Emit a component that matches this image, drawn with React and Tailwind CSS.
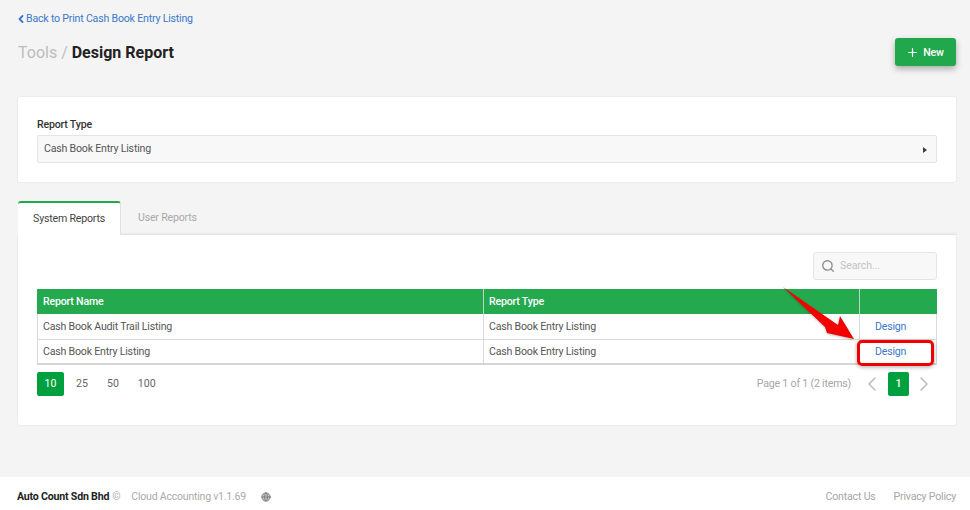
import React from "react";
import { ChevronLeft, ChevronRight, Plus, Search, Globe } from "lucide-react";

const font = { fontFamily: "Roboto, 'Liberation Sans', sans-serif" };

function Row({ name, last, designOffset }) {
  return (
    <div className={"flex h-[25.5px] items-center text-[10.6px] tracking-[-0.2px] text-[#555] bg-white " + (last ? "border-b-2 border-[#d4d4d4]" : "border-b border-[#d9d9d9]")}>
      <div className="w-[446px] h-full flex items-center pl-[5px] pt-[1px] border-r border-[#d9d9d9]">{name}</div>
      <div className="w-[376px] h-full flex items-center pl-[5px] pt-[1px] border-r border-[#d9d9d9]">Cash Book Entry Listing</div>
      <div className={"flex-1 h-full flex items-center pl-[15px] text-[#3a78c9] " + (designOffset ? "pt-[2px]" : "pt-[1px]")}>Design</div>
    </div>
  );
}

export default function App() {
  return (
    <div className="relative w-[970px] h-[510px] overflow-hidden bg-[#f4f4f4] flex flex-col" style={font}>
      <div className="flex-1 pl-[18px] pr-[14px]">
        <a className="flex items-center h-[14px] mt-[12px] text-[10.6px] tracking-[-0.2px] leading-[14px] text-[#3a78c9]">
          <ChevronLeft size={12} strokeWidth={3.6} className="shrink-0 -ml-[3px] -mr-[1px]" />
          <span>Back to Print Cash Book Entry Listing</span>
        </a>
        <div className="flex items-start justify-between mt-[12px]">
          <h1 className="text-[16px] leading-[28px] h-[27px] mt-[1px] font-normal text-[#bdbdbd]">
            Tools / <span className="font-bold text-[#222]">Design Report</span>
          </h1>
          <button className="w-[61px] h-[28px] rounded-[3px] bg-[#22a84c] text-white text-[10.6px] tracking-[-0.2px] font-medium flex items-center justify-center gap-[4px] pt-[1px] pr-[1px] shadow-[0_3px_6px_rgba(0,0,0,0.3)]">
            <Plus size={13} strokeWidth={2.2} />
            New
          </button>
        </div>

        <section className="mt-[31px] h-[85px] bg-white rounded-[2px] shadow-[0_0_2px_rgba(0,0,0,0.12)] px-[19px] pt-[21px]">
          <div className="text-[10.6px] tracking-[-0.2px] leading-[14px] font-medium text-[#333]">Report Type</div>
          <div className="mt-[3px] h-[28px] rounded-[2px] bg-[#f8f8f8] border border-[#e4e4e4] flex items-center justify-between pl-[6px] pr-[11px] pb-[1px] text-[10.6px] tracking-[-0.2px] text-[#555]">
            <span>Cash Book Entry Listing</span>
            <svg width="4" height="6" viewBox="0 0 4 6" className="mt-[2px] -mr-[2px]"><path d="M0 0 L4 3 L0 6 Z" fill="#3c3c3c" /></svg>
          </div>
        </section>

        <div className="mt-[19px] flex h-[33px] items-end relative z-10">
          <div className="w-[103px] h-[34px] mb-[-1px] bg-white border-t-2 border-[#22a84c] border-r border-r-[#e2e2e2] rounded-t-[3px] flex items-center justify-center text-[10.6px] tracking-[-0.2px] text-[#444]">
            System Reports
          </div>
          <div className="ml-[17px] h-[32px] flex items-center text-[10.6px] tracking-[-0.2px] text-[#a9a9a9] pb-[1px]">User Reports</div>
        </div>

        <section className="h-[191px] bg-white border-t border-[#e2e2e2] rounded-b-[2px] shadow-[0_0_2px_rgba(0,0,0,0.12)] px-[19px]">
          <div className="flex justify-end pt-[17px]">
            <div className="w-[124px] h-[28px] rounded-[3px] bg-[#f8f8f8] border border-[#e4e4e4] flex items-center pl-[7px] gap-[5px] text-[10.6px] tracking-[-0.1px] text-[#c4c4c4]">
              <Search size={14} strokeWidth={2.4} className="text-[#8f8f8f]" />
              <span>Search...</span>
            </div>
          </div>
          <div className="mt-[9px] w-[900px]">
            <div className="flex h-[25px] bg-[#24a94e] text-white text-[10.6px] tracking-[-0.2px] font-medium items-center">
              <div className="w-[447px] h-full flex items-center pl-[6px] border-r border-[#b9d9c2]">Report Name</div>
              <div className="w-[376px] h-full flex items-center pl-[5px] border-r border-[#b9d9c2]">Report Type</div>
              <div className="flex-1" />
            </div>
            <div className="border-x border-[#d9d9d9]">
              <Row name="Cash Book Audit Trail Listing" />
              <Row name="Cash Book Entry Listing" last designOffset />
            </div>
          </div>
          <div className="mt-[6px] flex items-center justify-between h-[25px] text-[10.6px] text-[#666]">
            <div className="flex items-center">
              <div className="w-[27px] h-[24px] rounded-[2px] bg-[#00a03e] text-white flex items-center justify-center">10</div>
              <span className="ml-[12px]">25</span>
              <span className="ml-[19px]">50</span>
              <span className="ml-[19px]">100</span>
            </div>
            <div className="flex items-center">
              <span className="text-[#a6a6a6] text-[10.6px] tracking-[-0.2px]">Page 1 of 1 (2 items)</span>
              <ChevronLeft size={24} strokeWidth={1.6} className="ml-[9px] text-[#bdbdbd]" />
              <div className="ml-[4px] w-[21px] h-[24px] rounded-[2px] bg-[#00a03e] text-white font-medium flex items-center justify-center">1</div>
              <ChevronRight size={24} strokeWidth={1.6} className="ml-[3px] mr-[1px] text-[#bdbdbd]" />
            </div>
          </div>
        </section>
      </div>

      <footer className="h-[33px] bg-white flex items-center justify-between pl-[17px] pr-[14px] pt-[7px] text-[10.6px] tracking-[-0.2px]">
        <div className="flex items-center">
          <span className="font-bold text-[#222]">Auto Count Sdn Bhd</span>
          <span className="ml-[3px] text-[#aaa]">©</span>
          <span className="ml-[11px] text-[#aaa] tracking-[-0.25px]">Cloud Accounting v1.1.69</span>
          <Globe size={10} strokeWidth={2} className="ml-[15px] text-[#777] fill-[#c4c4c4] mt-[1px]" />
        </div>
        <div className="flex items-center text-[#a6a6a6]">
          <span>Contact Us</span>
          <span className="ml-[18px]">Privacy Policy</span>
        </div>
      </footer>

      <div className="absolute left-[857px] top-[340px] w-[77px] h-[26px] rounded-[5px] border-[3px] border-[#f00000] shadow-[0_1px_4px_rgba(0,0,0,0.35)]" />
      <svg className="absolute left-[780px] top-[284px]" width="80" height="60" viewBox="0 0 80 60">
        <path d="M3 3 L58 41 L60 32 L74 55 L47 49 L45 43 Z" fill="#f40000" style={{ filter: "drop-shadow(0 1px 1px rgba(0,0,0,0.25))" }} />
      </svg>
    </div>
  );
}
